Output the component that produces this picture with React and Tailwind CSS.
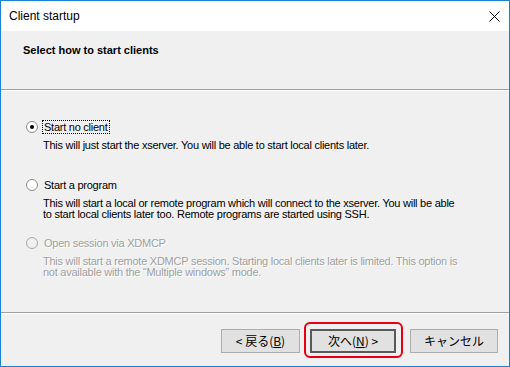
import React from "react";

const Radio = ({ checked, disabled }) => (
  <svg width="12" height="12" viewBox="0 0 12 12" className="shrink-0">
    <circle
      cx="6"
      cy="6"
      r="5.5"
      fill={disabled ? "#f0f0f0" : "#fff"}
      stroke={disabled ? "#a8a8a8" : "#8a8a8a"}
    />
    {checked && <circle cx="6" cy="6" r="2" fill="#000" />}
  </svg>
);

const Option = ({ label, lines, checked, disabled, focused, className = "" }) => (
  <div className={className}>
    <div className="flex items-center h-[14px]">
      <Radio checked={checked} disabled={disabled} />
      <span
        className={`ml-[4px] px-[1px] leading-[12px] border border-dotted ${
          focused ? "border-black" : "border-transparent"
        } ${disabled ? "text-[#a0a0a0] [text-shadow:1px_1px_0_#fff]" : "text-black"}`}
      >
        {label}
      </span>
    </div>
    <div
      className={`ml-[17px] mt-[6px] leading-[11px] ${
        disabled ? "text-[#a0a0a0] [text-shadow:1px_1px_0_#fff]" : "text-black"
      }`}
    >
      {lines.map((l) => (
        <div key={l}>{l}</div>
      ))}
    </div>
  </div>
);

export default function App() {
  return (
    <div className="w-[510px] h-[367px] border border-[#1883d7] bg-[#f0f0f0] flex flex-col font-['Liberation_Sans','Noto_Sans_CJK_JP',sans-serif] text-[11px] text-black overflow-hidden">
      {/* title bar */}
      <div className="h-[30px] bg-white flex items-center justify-between pl-[8px] pr-[9px] shrink-0">
        <span className="text-[12px] font-['Liberation_Sans',sans-serif]">Client startup</span>
        <svg width="11" height="11" viewBox="0 0 11 11">
          <path d="M0.5 0.5 L10.5 10.5 M10.5 0.5 L0.5 10.5" stroke="#000" strokeWidth="1" />
        </svg>
      </div>

      {/* header */}
      <div className="h-[58px] shrink-0 pl-[22px] pt-[11px]">
        <div className="font-bold text-[11px] font-['Liberation_Sans',sans-serif]">
          Select how to start clients
        </div>
      </div>
      <div className="h-[2px] shrink-0 border-t border-[#a0a0a0] border-b-0 bg-white" />

      {/* body */}
      <div className="flex-1 pl-[25px] pt-[29px] tracking-[-0.25px]">
        <Option
          checked
          focused
          label="Start no client"
          lines={["This will just start the xserver. You will be able to start local clients later."]}
        />
        <Option
          className="mt-[27px]"
          label="Start a program"
          lines={[
            "This will start a local or remote program which will connect to the xserver. You will be able",
            "to start local clients later too. Remote programs are started using SSH.",
          ]}
        />
        <Option
          className="mt-[16px]"
          disabled
          label="Open session via XDMCP"
          lines={[
            "This will start a remote XDMCP session. Starting local clients later is limited. This option is",
            "not available with the \u201CMultiple windows\u201D mode.",
          ]}
        />
      </div>
      <div className="h-[2px] shrink-0 border-t border-[#a0a0a0] bg-white" />

      {/* footer */}
      <div className="h-[52px] shrink-0 flex items-start justify-end pt-[15px] pr-[11px] text-[12px] font-['Noto_Sans_CJK_JP','Liberation_Sans',sans-serif]">
        <button className="w-[79px] h-[24px] bg-[#e1e1e1] border border-[#adadad] flex items-center justify-center">
          &lt; 戻る(<span className="underline">B</span>)
        </button>
        <div className="relative ml-[10px]">
          <button className="w-[86px] h-[24px] bg-[#e1e1e1] border-2 border-[#5a5a5a] flex items-center justify-center">
            次へ(<span className="underline">N</span>) &gt;
          </button>
          <div className="absolute -left-[6px] -right-[7px] -top-[7px] -bottom-[5px] border-2 border-[#e60012] rounded-[6px] pointer-events-none" />
        </div>
        <button className="ml-[14px] w-[88px] h-[24px] bg-[#e1e1e1] border border-[#adadad] flex items-center justify-center">
          キャンセル
        </button>
      </div>
    </div>
  );
}
